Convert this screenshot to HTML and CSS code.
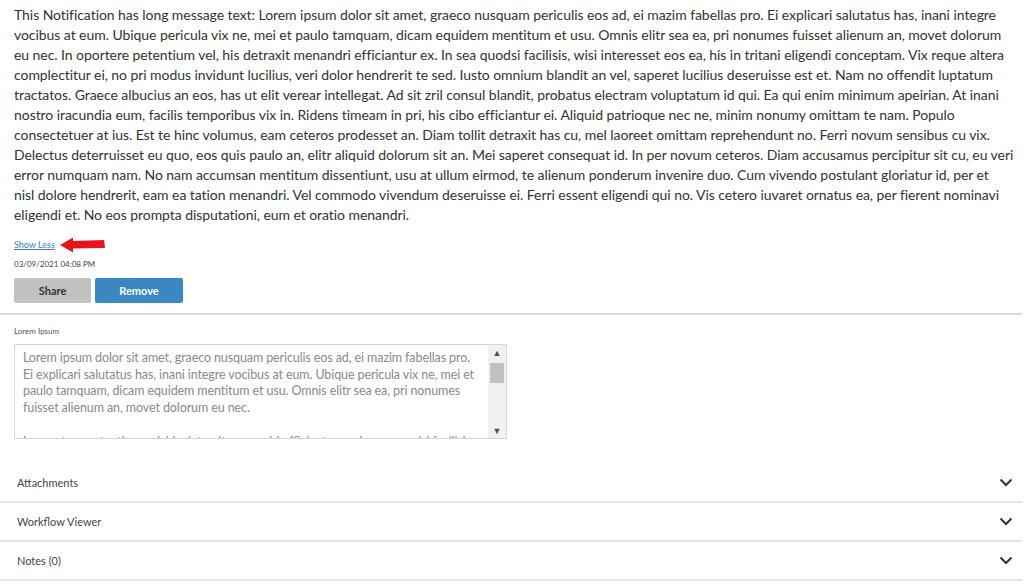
FILE: index.html
```html
<!DOCTYPE html>
<html lang="en">

<head>
    <meta charset="UTF-8">
    <meta name="viewport" content="width=device-width, initial-scale=1.0">
    <title>Notification</title>
    <link rel="stylesheet" href="styles.css">
</head>

<body>
    <div class="notification">
        <p class="message">This Notification has long message text: Lorem ipsum dolor sit amet, graeco nusquam periculis eos ad, ei mazim fabellas pro. Ei explicari salutatus has, inani integre<br>
            vocibus at eum. Ubique pericula vix ne, mei et paulo tamquam, dicam equidem mentitum et usu. Omnis elitr sea ea, pri nonumes fuisset alienum an, movet dolorum<br>
            eu nec. In oportere petentium vel, his detraxit menandri efficiantur ex. In sea quodsi facilisis, wisi interesset eos ea, his in tritani eligendi conceptam. Vix reque altera<br>
            complectitur ei, no pri modus invidunt lucilius, veri dolor hendrerit te sed. Iusto omnium blandit an vel, saperet lucilius deseruisse est et. Nam no offendit luptatum<br>
            tractatos. Graece albucius an eos, has ut elit verear intellegat. Ad sit zril consul blandit, probatus electram voluptatum id qui. Ea qui enim minimum apeirian. At inani<br>
            nostro iracundia eum, facilis temporibus vix in. Ridens timeam in pri, his cibo efficiantur ei. Aliquid patrioque nec ne, minim nonumy omittam te nam. Populo<br>
            consectetuer at ius. Est te hinc volumus, eam ceteros prodesset an. Diam tollit detraxit has cu, mel laoreet omittam reprehendunt no. Ferri novum sensibus cu vix.<br>
            Delectus deterruisset eu quo, eos quis paulo an, elitr aliquid dolorum sit an. Mei saperet consequat id. In per novum ceteros. Diam accusamus percipitur sit cu, eu veri<br>
            error numquam nam. No nam accumsan mentitum dissentiunt, usu at ullum eirmod, te alienum ponderum invenire duo. Cum vivendo postulant gloriatur id, per et<br>
            nisl dolore hendrerit, eam ea tation menandri. Vel commodo vivendum deseruisse ei. Ferri essent eligendi qui no. Vis cetero iuvaret ornatus ea, per fierent nominavi<br>
            eligendi et. No eos prompta disputationi, eum et oratio menandri.</p>

        <div class="show-less-row">
            <a href="#" class="show-less">Show Less</a>
            <svg class="pointer" width="46" height="16" viewBox="0 0 46 16">
                <path d="M0 8 L13 0.5 L13 4 L44 3 L45 11 L13 11.5 L13 15.5 Z" fill="#e8141c" />
            </svg>
        </div>

        <div class="timestamp">03/09/2021 04:08 PM</div>

        <div class="actions">
            <button class="btn btn-share">Share</button>
            <button class="btn btn-remove">Remove</button>
        </div>
    </div>

    <div class="divider"></div>

    <div class="field">
        <div class="field-label">Lorem Ipsum</div>
        <div class="textbox">
            <div class="textbox-text">
                <p>Lorem ipsum dolor sit amet, graeco nusquam periculis eos ad, ei mazim fabellas pro.<br>
                    Ei explicari salutatus has, inani integre vocibus at eum. Ubique pericula vix ne, mei et<br>
                    paulo tamquam, dicam equidem mentitum et usu. Omnis elitr sea ea, pri nonumes<br>
                    fuisset alienum an, movet dolorum eu nec.</p>
                <p>In oportere petentium vel, his detraxit menandri efficiantur ex. In sea quodsi facilisis</p>
            </div>
            <div class="scrollbar">
                <span class="arrow">&#9650;</span>
                <div class="track">
                    <div class="thumb"></div>
                </div>
                <span class="arrow">&#9660;</span>
            </div>
        </div>
    </div>

    <div class="accordion">
        <div class="acc-row">
            <span>Attachments</span>
            <svg class="chevron" width="14" height="9" viewBox="0 0 14 9">
                <path d="M1.5 1.5 L7 7 L12.5 1.5" fill="none" stroke="#333" stroke-width="2" />
            </svg>
        </div>
        <div class="acc-row">
            <span>Workflow Viewer</span>
            <svg class="chevron" width="14" height="9" viewBox="0 0 14 9">
                <path d="M1.5 1.5 L7 7 L12.5 1.5" fill="none" stroke="#333" stroke-width="2" />
            </svg>
        </div>
        <div class="acc-row">
            <span>Notes (0)</span>
            <svg class="chevron" width="14" height="9" viewBox="0 0 14 9">
                <path d="M1.5 1.5 L7 7 L12.5 1.5" fill="none" stroke="#333" stroke-width="2" />
            </svg>
        </div>
    </div>
</body>

</html>
```

FILE: styles.css
```css
body {
    margin: 0;
    font-family: 'Lato', 'Open Sans', sans-serif;
    color: #333;
    background: #fff;
    overflow-x: hidden;
}

.notification {
    padding: 5px 0 0 14px;
    width: 1000px;
}

.message {
    margin: 0;
    font-size: 14px;
    line-height: 20px;
    letter-spacing: -0.06px;
    white-space: nowrap;
    color: #333;
}

.show-less-row {
    display: flex;
    align-items: center;
    margin-top: 12px;
    height: 14px;
}

.show-less {
    font-size: 9px;
    color: #3a7fc1;
    text-decoration: underline;
}

.pointer {
    margin-left: 5px;
    margin-top: 1px;
}

.timestamp {
    margin-top: 8px;
    font-size: 8px;
    color: #444;
}

.actions {
    display: flex;
    gap: 4px;
    margin-top: 9px;
}

.btn {
    height: 25px;
    border: none;
    border-radius: 2px;
    font-family: 'Lato', 'Open Sans', sans-serif;
    font-size: 11px;
    font-weight: bold;
    cursor: pointer;
}

.btn-share {
    width: 77px;
    background-color: #c2c2c2;
    color: #333;
}

.btn-remove {
    width: 88px;
    background-color: #3a87c4;
    color: #fff;
}

.divider {
    margin-top: 10px;
    width: 1022px;
    height: 2px;
    background: #d9d9d9;
}

.field {
    padding: 11px 0 0 14px;
}

.field-label {
    font-size: 8px;
    color: #555;
    height: 12px;
}

.textbox {
    display: flex;
    margin-top: 6px;
    width: 491px;
    height: 93px;
    border: 1px solid #d6d6d6;
    overflow: hidden;
}

.textbox-text {
    flex: 1;
    padding: 5px 8px 0 8px;
    font-size: 12.5px;
    line-height: 16.7px;
    letter-spacing: -0.1px;
    white-space: nowrap;
    color: #8a8a8a;
    overflow: hidden;
}

.textbox-text p {
    margin: 0 0 16.7px 0;
}

.scrollbar {
    width: 18px;
    background: #f1f1f1;
    display: flex;
    flex-direction: column;
    align-items: center;
}

.arrow {
    font-size: 9px;
    color: #505050;
    height: 15px;
    line-height: 15px;
}

.track {
    flex: 1;
    width: 100%;
}

.thumb {
    margin: 3px 2px 0 2px;
    height: 20px;
    background: #c1c1c1;
}

.accordion {
    margin-top: 25px;
    width: 1022px;
}

.acc-row {
    display: flex;
    justify-content: space-between;
    align-items: center;
    height: 37px;
    padding: 0 9px 0 17px;
    border-bottom: 2px solid #e6e6e6;
    font-size: 11px;
    color: #444;
}
```
